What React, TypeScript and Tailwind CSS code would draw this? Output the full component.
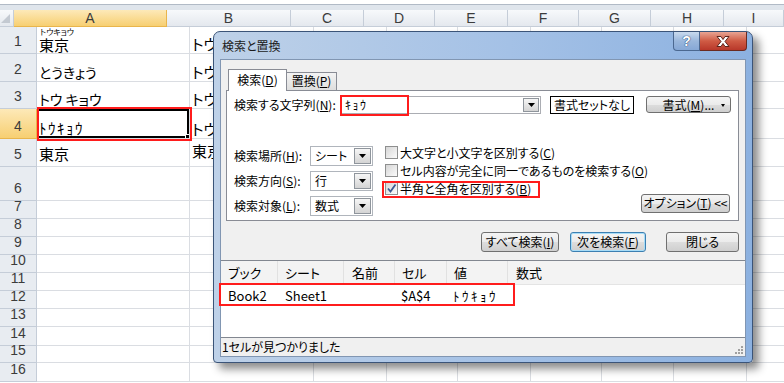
import React from 'react'

const jp = "font-['Noto_Sans_CJK_JP','Noto_Sans',sans-serif] [font-feature-settings:'palt']"
const en = "font-['Liberation_Sans',Arial,sans-serif]"
// half-width kana: no palt, they get too narrow otherwise
const hw = '[font-feature-settings:normal]'

const colW = ['w-[37px]', 'w-[153px]', 'w-[124px]', 'w-[73px]', 'w-[71px]', 'w-[73px]', 'w-[71px]', 'w-[72px]', 'w-[73px]', 'w-[60px]']
const rowH = [
  'h-[27px]', 'h-[28px]', 'h-[27px]', 'h-[30px]', 'h-[28px]', 'h-[34px]', 'h-[18px]', 'h-[18px]',
  'h-[18px]', 'h-[18px]', 'h-[18px]', 'h-[18px]', 'h-[18px]', 'h-[19px]', 'h-[17px]', 'h-[19px]',
]
const colLabels = ['A', 'B', 'C', 'D', 'E', 'F', 'G', 'H', 'I']
const cellsB = ['トウキョウ', 'トウキョウ', 'トウキョウ', 'トウキョウ', '東京']

const hdrOn = 'bg-[linear-gradient(#fde9b8,#f7cf72)] border-[#e9b54c]'
const hdrOff = 'bg-[linear-gradient(#f7f9fb,#e4e8ee)] border-[#c5cdd8]'

function Tri() {
  return (
    <svg width="7" height="4" viewBox="0 0 7 4">
      <path d="M0 0h7L3.5 4z" fill="#000" />
    </svg>
  )
}

function CellA({ row }: { row: number }) {
  if (row === 0)
    return (
      <div className="flex flex-col">
        <span className="text-[8px] leading-[10px] ml-[1px]">トウキョウ</span>
        <span>東京</span>
      </div>
    )
  if (row === 1) return <span className="text-[14px]">とうきょう</span>
  if (row === 2) return <span className="text-[14px]">トウ キョウ</span>
  if (row === 3) return <span className={`${hw} tracking-[1.5px] mb-[1px]`}>ﾄｳｷｮｳ</span>
  if (row === 4) return <span className="mb-[3px]">東京</span>
  return null
}

function Sheet() {
  return (
    <div className="flex flex-col">
      <div className="h-[5px] bg-white border-b border-[#b1bac6]" />
      <div className="h-[5px] bg-[#dfe5ec]" />

      {/* column headers */}
      <div className={`flex h-[17px] ${en} text-[14px] text-[#3c3c3c]`}>
        <div className={`${colW[0]} relative border-r border-b ${hdrOff}`}>
          <div className="absolute right-[3px] bottom-[3px] w-[9px] h-[9px] bg-[#c3c9d1] [clip-path:polygon(100%_0,100%_100%,0_100%)]" />
        </div>
        {colLabels.map((c, i) => (
          <div
            key={c}
            className={`${colW[i + 1]} shrink-0 flex items-center justify-center border-r border-b ${i === 0 ? hdrOn : hdrOff}`}
          >
            {c}
          </div>
        ))}
      </div>

      {/* rows */}
      {rowH.map((h, r) => (
        <div key={r} className={`flex ${h}`}>
          <div
            className={`${colW[0]} shrink-0 flex items-end justify-center pb-[1px] border-r border-b ${en} text-[14px] text-[#3c3c3c] ${
              r === 3 ? hdrOn : 'bg-[#e8ecf1] border-[#c5cdd8]'
            }`}
          >
            {r + 1}
          </div>
          {colW.slice(1).map((w, c) => (
            <div
              key={c}
              className={`${w} shrink-0 relative flex items-end pl-[2px] ${r === 0 ? 'pb-[1px]' : 'pb-[2px]'} border-r border-b border-[#dadde2] whitespace-nowrap overflow-hidden ${jp} text-[15px] leading-none text-black`}
            >
              {c === 0 && <CellA row={r} />}
              {c === 1 && r < 5 && <span className={r === 4 ? 'mb-[6px]' : r === 0 ? 'mb-[1px]' : ''}>{cellsB[r]}</span>}
              {c === 0 && r === 3 && (
                <div className="absolute left-0 top-0 right-0 bottom-0 border-2 border-black">
                  <div className="absolute right-[-3px] bottom-[-3px] w-[5px] h-[5px] bg-black border border-white" />
                </div>
              )}
            </div>
          ))}
        </div>
      ))}
      {/* red marker on A4 */}
      <div className="absolute left-[37px] top-[107px] w-[155px] h-[34px] border-2 border-[#ff1c1c]" />
    </div>
  )
}

function Btn({ children, className = '' }: { children: React.ReactNode; className?: string }) {
  return (
    <div
      className={`flex items-center justify-center whitespace-nowrap rounded-[3px] border border-[#707070] bg-[linear-gradient(#f4f4f4_0%,#ebebeb_50%,#dddddd_50%,#cfcfcf_100%)] text-[12px] leading-none ${className}`}
    >
      {children}
    </div>
  )
}

function Select({ value }: { value: string }) {
  return (
    <div className="w-[63px] h-[20px] flex border border-[#b0b5bc] bg-white">
      <div className="flex-1 flex items-center pl-[4px] text-[12px] leading-none">{value}</div>
      <div className="w-[17px] m-[1px] border border-[#8f959c] bg-[linear-gradient(#f6f6f6,#d4d4d4)] flex items-center justify-center">
        <Tri />
      </div>
    </div>
  )
}

function Check({ checked }: { checked?: boolean }) {
  return (
    <div className="w-[13px] h-[13px] shrink-0 border border-[#8e8f8f] bg-[linear-gradient(135deg,#d6d6d6,#fbfbfb)] flex items-center justify-center">
      {checked && (
        <svg width="11" height="11" viewBox="0 0 11 11">
          <path d="M2 5.5L4.5 8.5L9.5 1.5" fill="none" stroke="#3f5b93" strokeWidth="1.8" />
        </svg>
      )}
    </div>
  )
}

function Dialog() {
  return (
    <div
      className={`absolute left-[213px] top-[31px] w-[540px] h-[332px] flex flex-col rounded-t-[7px] rounded-b-[4px] border border-[#3b5478] bg-[linear-gradient(to_right,#bed1e8,#a4c1e6_55%,#8cb1e0)] shadow-[6px_6px_9px_rgba(0,0,0,0.45)] ${jp} text-black`}
    >
      {/* title bar */}
      <div className="relative h-[27px] flex items-center pl-[8px] text-[12px] text-[#1b1b1b]">
        検索と置換
        <div className="absolute top-0 right-[5px] flex">
          <div className="w-[27px] h-[19px] rounded-bl-[4px] border border-t-0 border-[#4b6890] bg-[linear-gradient(#c9daee,#9ab7dc_50%,#86a8d6)] flex items-center justify-center">
            <span className={`${en} text-[14px] font-bold text-white leading-none [text-shadow:0_0_1px_#1d3a66,0_0_1px_#1d3a66]`}>?</span>
          </div>
          <div className="w-[47px] h-[19px] rounded-br-[4px] border border-l-0 border-t-0 border-[#6b2a20] bg-[linear-gradient(#e8a493,#cf5b44_50%,#b8382a)] flex items-center justify-center">
            <svg width="18" height="13" viewBox="0 0 18 13">
              <path
                d="M3 1.5h4l2 3 2-3h4l-4 5 4 5h-4l-2-3-2 3H3l4-5z"
                fill="#fff"
                stroke="#5c241b"
                strokeWidth="1"
                strokeLinejoin="round"
              />
            </svg>
          </div>
        </div>
      </div>

      {/* client */}
      <div className="mx-[6px] h-[298px] border border-[#8196b2] bg-[#f0f0f0] flex flex-col">
        {/* tabs */}
        <div className="h-[30px] pl-[7px] flex items-end text-[12px]">
          <div className="relative z-10 w-[59px] h-[22px] -mb-[1px] border border-b-0 border-[#898c95] bg-white flex items-center justify-center">
            検索(<u>D</u>)
          </div>
          <div className="w-[50px] h-[18px] border border-l-0 border-b-0 border-[#898c95] bg-[linear-gradient(#f3f3f3,#dedede)] flex items-center justify-center">
            置換(<u>P</u>)
          </div>
        </div>

        {/* panel */}
        <div className="ml-[5px] w-[513px] h-[132px] border border-[#898c95] bg-white flex flex-col text-[12px]">
          <div className="mt-[5px] pl-[7px] h-[18px] flex items-center whitespace-nowrap">
            <div className="w-[106px]">検索する文字列(<u>N</u>):</div>
            <div className="relative w-[201px] h-[18px] border border-[#abadb3] bg-white flex">
              <div className={`flex-1 flex items-center pl-[4px] leading-none ${hw} tracking-[1.5px]`}>ｷｮｳ</div>
              <div className="w-[16px] m-[1px] border border-[#8f959c] bg-[linear-gradient(#f6f6f6,#d4d4d4)] flex items-center justify-center">
                <Tri />
              </div>
              <div className="absolute left-[-1px] top-[-2px] w-[69px] h-[21px] border-2 border-[#ff1c1c]" />
            </div>
            <div className="ml-[9px] w-[84px] h-[18px] border border-black bg-white flex items-center justify-center leading-none">
              書式セットなし
            </div>
            <Btn className="ml-[12px] w-[85px] h-[17px] relative">
              書式(<u>M</u>)...
              <span className="absolute right-[5px] top-[7px] w-0 h-0 border-x-[2px] border-x-transparent border-t-[3px] border-t-black" />
            </Btn>
          </div>

          <div className="mt-[32px] pl-[7px] flex items-start whitespace-nowrap">
            <div className="flex flex-col gap-[5px] shrink-0">
              <div className="flex items-center h-[20px]">
                <div className="w-[76px]">検索場所(<u>H</u>):</div>
                <Select value="シート" />
              </div>
              <div className="flex items-center h-[20px]">
                <div className="w-[76px]">検索方向(<u>S</u>):</div>
                <Select value="行" />
              </div>
              <div className="flex items-center h-[20px]">
                <div className="w-[76px]">検索対象(<u>L</u>):</div>
                <Select value="数式" />
              </div>
            </div>
            <div className="ml-[12px] -mt-[2px] w-[240px] flex flex-col shrink-0">
              <div className="h-[18px] flex items-center gap-[2px]">
                <Check />
                <span>大文字と小文字を区別する(<u>C</u>)</span>
              </div>
              <div className="h-[18px] flex items-center gap-[2px]">
                <Check />
                <span>セル内容が完全に同一であるものを検索する(<u>O</u>)</span>
              </div>
              <div className="relative h-[18px] flex items-center gap-[2px]">
                <Check checked />
                <span>半角と全角を区別する(<u>B</u>)</span>
                <div className="absolute left-[-3px] top-[1px] w-[158px] h-[17px] border-2 border-[#ff1c1c]" />
              </div>
            </div>
            <Btn className="ml-auto mr-[8px] mt-[48px] w-[89px] h-[19px] shrink-0">
              オプション(<u>T</u>)&nbsp;&lt;&lt;
            </Btn>
          </div>
        </div>

        {/* action buttons */}
        <div className="mt-[11px] pr-[6px] flex justify-end">
          <Btn className="w-[78px] h-[20px]">すべて検索(<u>I</u>)</Btn>
          <Btn className="ml-[11px] w-[76px] h-[20px] !border-[#3c7fb1] shadow-[inset_0_0_0_1px_#a7dcf7]">
            次を検索(<u>F</u>)
          </Btn>
          <Btn className="ml-[20px] w-[73px] h-[20px]">閉じる</Btn>
        </div>

        {/* results list */}
        <div className="mt-[8px] h-[78px] border-y border-[#828790] bg-white flex flex-col text-[13px]">
          <div className="h-[24px] flex bg-[#f3f3f3] border-b border-[#e4e4e4]">
            <div className="w-[57px] pl-[7px] flex items-center border-r border-[#e1e1e1]">ブック</div>
            <div className="w-[66px] pl-[7px] flex items-center border-r border-[#e1e1e1]">シート</div>
            <div className="w-[51px] pl-[8px] flex items-center border-r border-[#e1e1e1]">名前</div>
            <div className="w-[52px] pl-[7px] flex items-center border-r border-[#e1e1e1]">セル</div>
            <div className="w-[61px] pl-[7px] flex items-center border-r border-[#e1e1e1]">値</div>
            <div className="flex-1 pl-[8px] flex items-center">数式</div>
          </div>
          <div className="relative h-[21px] flex items-center whitespace-nowrap">
            <div className="w-[57px] pl-[7px]">Book2</div>
            <div className="w-[66px] pl-[7px]">Sheet1</div>
            <div className="w-[51px] pl-[8px]" />
            <div className="w-[52px] pl-[6px]">$A$4</div>
            <div className={`w-[61px] pl-[6px] ${hw} tracking-[2.5px]`}>ﾄｳｷｮｳ</div>
            <div className="absolute left-[-2px] top-[-2px] w-[296px] h-[23px] border-2 border-[#ff1c1c]" />
          </div>
        </div>

        {/* status bar */}
        <div className="relative flex-1 flex items-center pl-[1px] text-[12px]">
          1セルが見つかりました
          <svg className="absolute right-[1px] bottom-[1px]" width="10" height="10" viewBox="0 0 10 10">
            <g fill="#a0a0a0">
              <rect x="7" y="1" width="2" height="2" />
              <rect x="4" y="4" width="2" height="2" />
              <rect x="7" y="4" width="2" height="2" />
              <rect x="1" y="7" width="2" height="2" />
              <rect x="4" y="7" width="2" height="2" />
              <rect x="7" y="7" width="2" height="2" />
            </g>
          </svg>
        </div>
      </div>
    </div>
  )
}

export default function App() {
  return (
    <div className="relative w-[784px] h-[383px] overflow-hidden bg-white">
      <Sheet />
      <Dialog />
    </div>
  )
}
